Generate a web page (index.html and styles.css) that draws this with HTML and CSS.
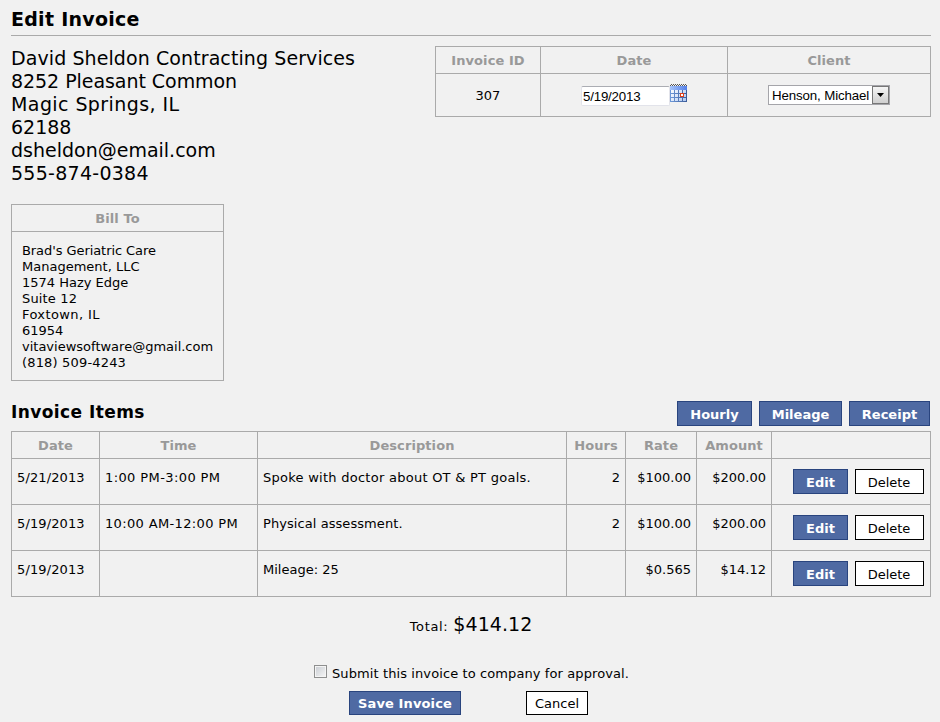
FILE: index.html
```html
<!DOCTYPE html>
<html lang="en">
<head>
<meta charset="utf-8">
<title>Edit Invoice</title>
<link rel="stylesheet" href="styles.css">
</head>
<body>
<main class="page">
  <h1 class="title">Edit Invoice</h1>
  <div class="top">
    <div class="sender">
      <div class="s1">David Sheldon Contracting Services</div>
      <div class="s2">8252 Pleasant Common</div>
      <div class="s3">Magic Springs, IL</div>
      <div class="s4">62188</div>
      <div class="s5">dsheldon@email.com</div>
      <div class="s6">555-874-0384</div>
    </div>
    <table class="grid info">
      <colgroup><col class="i-id"><col class="i-date"><col class="i-client"></colgroup>
      <tr><th>Invoice ID</th><th>Date</th><th>Client</th></tr>
      <tr>
        <td class="invoice-id">307</td>
        <td>
          <div class="date-field">
            <input class="date-input" type="text" value="5/19/2013">
            <svg class="calendar" width="17" height="18" viewBox="0 0 17 18" shape-rendering="crispEdges">
              <defs>
                <linearGradient id="bar"><stop offset="0" stop-color="#a5c4fa"/><stop offset="1" stop-color="#5580e8"/></linearGradient>
                <linearGradient id="cells" gradientUnits="userSpaceOnUse" x1="0" y1="6" x2="17" y2="18"><stop offset="0" stop-color="#fff"/><stop offset="1" stop-color="#a9c4f0"/></linearGradient>
                <linearGradient id="lines"><stop offset="0" stop-color="#6f9ada"/><stop offset="1" stop-color="#3c5c98"/></linearGradient>
              </defs>
              <path d="M1 .5H17M0 1.500H17" stroke="#555" stroke-dasharray="1 1" fill="none"/>
              <rect y="2" width="17" height="16" fill="url(#lines)"/>
              <rect y="2" width="17" height="4" fill="url(#bar)"/>
              <path d="M1 6h3v3H1zM5 6h3v3H5zM9 6h3v3H9zM13 6h3v3h-3zM1 10h3v3H1zM5 10h3v3H5zM9 10h3v3H9zM13 10h3v3h-3zM1 14h3v3H1zM5 14h3v3H5zM9 14h3v3H9zM13 14h3v3h-3z" fill="url(#cells)"/>
              <rect x="10.500" y="9.500" width="3" height="3" fill="#fff" stroke="#e0401a"/>
            </svg>
          </div>
        </td>
        <td>
          <div class="select"><span class="select-text">Henson, Michael</span><span class="select-button"><svg width="7" height="4" viewBox="0 0 7 4"><path d="M0 0h7L3.500 4z"/></svg></span></div>
        </td>
      </tr>
    </table>
  </div>
  <table class="grid bill">
    <tr><th>Bill To</th></tr>
    <tr><td>
      <div class="b1">Brad's Geriatric Care</div>
      <div class="b2">Management, LLC</div>
      <div class="b3">1574 Hazy Edge</div>
      <div class="b4">Suite 12</div>
      <div class="b5">Foxtown, IL</div>
      <div class="b6">61954</div>
      <div class="b7">vitaviewsoftware@gmail.com</div>
      <div class="b8">(818) 509-4243</div>
    </td></tr>
  </table>
  <div class="items-head">
    <h2 class="subtitle">Invoice Items</h2>
    <div class="actions">
      <button class="btn primary hourly">Hourly</button>
      <button class="btn primary mileage">Mileage</button>
      <button class="btn primary receipt">Receipt</button>
    </div>
  </div>
  <table class="grid items">
    <colgroup><col class="c-date"><col class="c-time"><col class="c-desc"><col class="c-hours"><col class="c-rate"><col class="c-amount"><col class="c-act"></colgroup>
    <tr><th>Date</th><th>Time</th><th>Description</th><th>Hours</th><th>Rate</th><th>Amount</th><th></th></tr>
    <tr>
      <td class="day">5/21/2013</td><td class="t1">1:00 PM-3:00 PM</td><td class="d1">Spoke with doctor about OT &amp; PT goals.</td><td class="num">2</td><td class="num">$100.00</td><td class="num">$200.00</td>
      <td><div class="row-actions"><button class="btn primary edit">Edit</button><button class="btn plain delete">Delete</button></div></td>
    </tr>
    <tr>
      <td class="day">5/19/2013</td><td class="t2">10:00 AM-12:00 PM</td><td class="d2">Physical assessment.</td><td class="num">2</td><td class="num">$100.00</td><td class="num">$200.00</td>
      <td><div class="row-actions"><button class="btn primary edit">Edit</button><button class="btn plain delete">Delete</button></div></td>
    </tr>
    <tr>
      <td class="day">5/19/2013</td><td></td><td class="d3">Mileage: 25</td><td></td><td class="num">$0.565</td><td class="num">$14.12</td>
      <td><div class="row-actions"><button class="btn primary edit">Edit</button><button class="btn plain delete">Delete</button></div></td>
    </tr>
  </table>
  <div class="total"><span class="total-label">Total:</span><span class="total-value">$414.12</span></div>
  <label class="approve"><input class="check" type="checkbox"><span class="approve-text">Submit this invoice to company for approval.</span></label>
  <div class="form-actions">
    <button class="btn primary save">Save Invoice</button>
    <button class="btn plain cancel">Cancel</button>
  </div>
</main>
</body>
</html>
```
FILE: styles.css
```css
* { box-sizing: border-box; }
body { margin: 0; background: #f1f1f1; color: #000; font: 13px/16px Verdana, "DejaVu Sans", sans-serif; }
.page { width: 920px; height: 722px; margin-left: 11px; overflow: hidden; }
.title { height: 36px; margin: 0; padding-top: 8px; border-bottom: 1px solid #aaa; font-size: 19px; line-height: 22px; letter-spacing: .27px; }
.top { display: flex; justify-content: space-between; height: 168px; padding-top: 10px; }
.sender { padding-top: 1px; font-size: 19px; line-height: 23px; white-space: nowrap; }
.s1 { letter-spacing: .09px; }
.s2 { letter-spacing: -.05px; }
.s3 { letter-spacing: .42px; }
.s6 { letter-spacing: .27px; }

.grid { border-collapse: separate; border-spacing: 0; table-layout: fixed; border: solid #aaa; border-width: 1px 0 0 1px; }
.grid th, .grid td { border: solid #aaa; border-width: 0 1px 1px 0; padding: 0; white-space: nowrap; }
.grid th { height: 27px; padding-top: 1px; color: #999; font-weight: bold; text-align: center; letter-spacing: .08px; }

.info { width: 496px; height: 71px; }
.info td { height: 43px; text-align: center; }
.info .invoice-id { padding-top: 2px; }
.i-id { width: 105px; }
.i-date { width: 187px; }
.i-client { width: 203px; }
.date-field { display: flex; justify-content: center; height: 23px; }
.date-input { width: 89px; height: 20px; margin: 2px 0 0; padding: 1px 1px 0; border: 1px solid #e2e3ea; border-top-color: #abadb3; border-radius: 2px; background: #fff; color: #000; font: 13.3px/17px Arial, "Liberation Sans", sans-serif; letter-spacing: -.2px; outline: 0; }
.select { display: inline-flex; width: 122px; height: 20px; border: 1px solid #a5a5aa; background: #fff; color: #000; font: 13.3px/19px Arial, "Liberation Sans", sans-serif; letter-spacing: -.13px; vertical-align: middle; }
.select-text { width: 103px; padding-left: 3px; text-align: left; }
.select-button { display: flex; align-items: center; justify-content: center; width: 17px; height: 18px; border: 1px solid #777; background: linear-gradient(#f5f5f5, #cfcfcf); }

.bill { width: 213px; height: 177px; }
.bill td { height: 149px; padding: 11px 0 7px 10px; vertical-align: top; }
.b1 { letter-spacing: -.07px; }
.b4 { letter-spacing: .15px; }
.b5 { letter-spacing: .4px; }
.b8 { letter-spacing: .17px; }

.items-head { display: flex; justify-content: space-between; height: 50px; padding: 20px 1px 0 0; }
.subtitle { margin: 0; font-size: 17px; line-height: 22px; letter-spacing: .42px; }
.actions { display: flex; gap: 7px; }
.btn { display: block; height: 25px; margin: 0; padding: 2px 0 0; border: 1px solid; border-radius: 0; font: 13px/16px Verdana, "DejaVu Sans", sans-serif; text-align: center; white-space: nowrap; }
.primary { border-color: #29447e; background: #4f6aa3; color: #fff; font-weight: bold; }
.plain { border-color: #000; background: #fff; color: #000; }
.hourly { width: 75px; }
.mileage { width: 83px; }
.receipt { width: 81px; }

.items { width: 920px; height: 166px; }
.c-date { width: 88px; }
.c-time { width: 158px; }
.c-desc { width: 309px; }
.c-hours { width: 59px; }
.c-rate { width: 71px; }
.c-amount { width: 75px; }
.c-act { width: 159px; }
.items td { height: 46px; padding: 11px 5px 0; vertical-align: top; }
.items .num { text-align: right; }
.items td:last-child { padding-top: 10px; }
.day { letter-spacing: .12px; }
.t1 { letter-spacing: .4px; }
.t2 { letter-spacing: .35px; }
.d1 { letter-spacing: .26px; }
.d2 { letter-spacing: .07px; }
.row-actions { display: flex; justify-content: flex-end; gap: 7px; padding-right: 1px; }
.edit { width: 55px; }
.delete { width: 69px; padding-right: 1px; }

.total { display: flex; align-items: baseline; justify-content: center; gap: 5px; height: 67px; padding-top: 15px; line-height: 24px; }
.total-label { letter-spacing: .65px; }
.total-value { font-size: 19px; letter-spacing: .05px; }
.approve { display: flex; align-items: flex-start; height: 27px; margin-left: 303px; padding-top: 1px; }
.check { width: 13px; height: 13px; margin: 0 5px 0 0; appearance: none; border: 1px solid #8e8f8f; background: linear-gradient(135deg, #c8ccd2, #f6f6f6); box-shadow: inset 0 0 0 1px #f4f4f4; }
.approve-text { padding-top: 1px; white-space: nowrap; letter-spacing: .1px; }
.form-actions { display: flex; gap: 65px; margin-left: 338px; }
.form-actions .btn { height: 24px; }
.save { width: 112px; letter-spacing: .12px; }
.cancel { width: 62px; }
```
